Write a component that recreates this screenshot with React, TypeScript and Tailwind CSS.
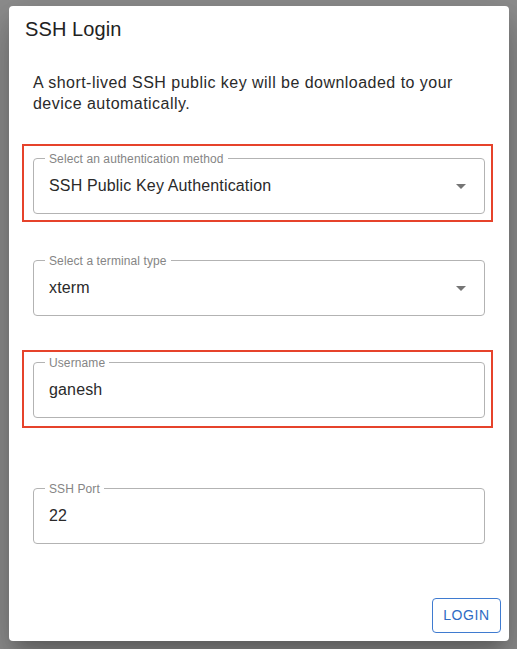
import { ReactNode } from 'react'

function ArrowDrop() {
  return (
    <svg viewBox="0 0 24 24" className="w-6 h-6 fill-[#757575] shrink-0">
      <path d="M7 10l5 5 5-5z" />
    </svg>
  )
}

interface FieldProps {
  label: string
  value: string
  select?: boolean
  className?: string
  highlight?: 'a' | 'b'
}

function Field({ label, value, select, className = '', highlight }: FieldProps) {
  return (
    <div className={`relative ${className}`}>
      <div className="relative h-[56px] border border-[#b3b3b3] rounded-[4px] flex items-center pl-[15px] pr-[11px]">
        <span className="absolute left-[11px] -top-[8px] px-[4px] bg-white text-[12px] leading-[16px] tracking-[0.1px] text-[#858585]">
          {label}
        </span>
        <span className="flex-1 text-[16px] tracking-[0.15px] text-[#2a2a2a]">{value}</span>
        {select && <ArrowDrop />}
      </div>
      {highlight === 'a' && (
        <div className="absolute -top-[14px] -left-[11px] -right-[8px] -bottom-[8px] border-2 border-[#e6432b] pointer-events-none" />
      )}
      {highlight === 'b' && (
        <div className="absolute -top-[12px] -left-[11px] -right-[8px] -bottom-[10px] border-2 border-[#e6432b] pointer-events-none" />
      )}
    </div>
  )
}

function Dialog({ children }: { children: ReactNode }) {
  return (
    <div className="w-[500px] h-[635px] bg-white rounded-[4px] shadow-[0_11px_15px_-7px_rgba(0,0,0,0.2),0_24px_38px_3px_rgba(0,0,0,0.14),0_9px_46px_8px_rgba(0,0,0,0.12)] flex flex-col">
      {children}
    </div>
  )
}

export default function App() {
  return (
    <div className="w-full h-[649px] bg-[#8e8e8e] pt-[6px] pl-[9px] overflow-hidden font-['Liberation_Sans',Arial,sans-serif]">
      <Dialog>
        <h2 className="pt-[7px] pl-[16px] text-[20px] leading-[32px] tracking-[0.1px] text-[#222]">SSH Login</h2>
        <div className="px-[24px]">
          <p className="mt-[27px] text-[16px] leading-[21px] tracking-[0.47px] text-[#2a2a2a]">
            A short-lived SSH public key will be downloaded to your device automatically.
          </p>
          <Field
            className="mt-[44px]"
            label="Select an authentication method"
            value="SSH Public Key Authentication"
            select
            highlight="a"
          />
          <Field className="mt-[46px]" label="Select a terminal type" value="xterm" select />
          <Field className="mt-[46px]" label="Username" value="ganesh" highlight="b" />
          <Field className="mt-[70px]" label="SSH Port" value="22" />
        </div>
        <div className="mt-auto flex justify-end p-[8px]">
          <button
            type="button"
            className="h-[35px] w-[69px] border border-[#3f7bd0] rounded-[4px] text-[14px] font-medium tracking-[0.6px] text-[#2f6bc4]"
          >
            LOGIN
          </button>
        </div>
      </Dialog>
    </div>
  )
}
